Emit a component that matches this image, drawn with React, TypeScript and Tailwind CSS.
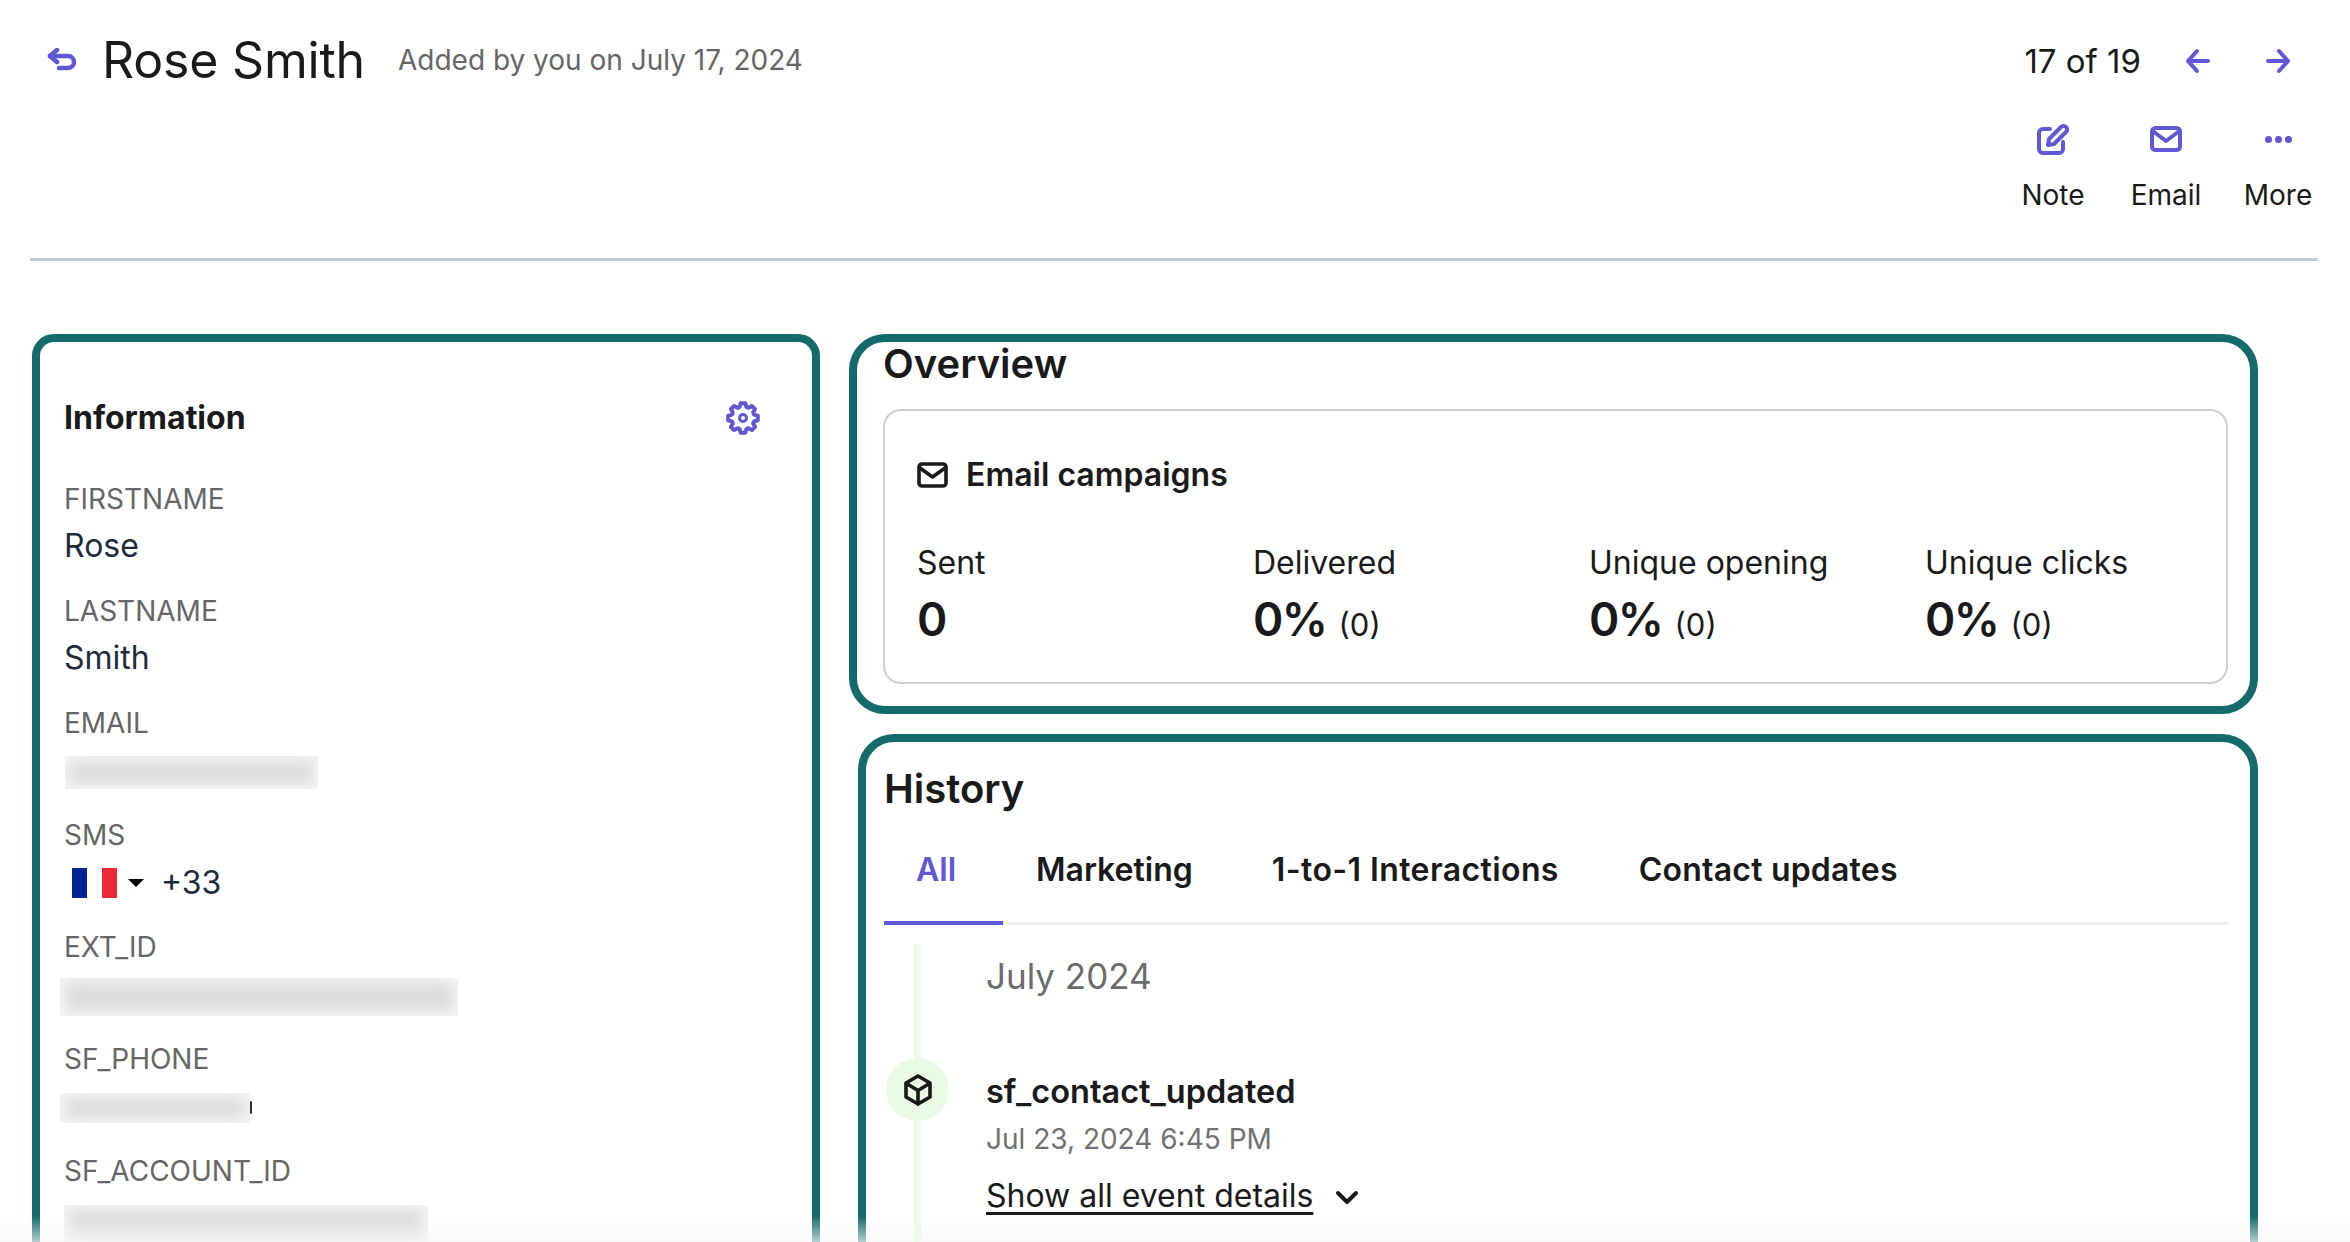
const fieldLabel = "text-[28px] leading-[34px] text-[#666666]";
const fieldValue = "text-[32px] leading-[38px] text-[#1f2a3c]";

// 8 rounded teeth, the stroke's round joins do the softening
function gearPath() {
  const pts: string[] = [];
  for (let i = 0; i < 8; i++) {
    const a = (i * Math.PI) / 4 - Math.PI / 2;
    const p = (r: number, d: number) =>
      `${(17 + r * Math.cos(a + d)).toFixed(2)} ${(17 + r * Math.sin(a + d)).toFixed(2)}`;
    pts.push(p(11.5, -0.3), p(15, -0.15), p(15, 0.15), p(11.5, 0.3));
  }
  return `M${pts.join("L")}Z`;
}

function Blur({ className }: { className: string }) {
  return (
    <div className={`overflow-hidden bg-[#f5f5f6] ${className}`}>
      <div className="m-[5px] h-[calc(100%-10px)] bg-[#dcdcde] blur-[7px]"></div>
    </div>
  );
}

function Metric({ label, value, count }: { label: string; value: string; count?: string }) {
  return (
    <div className="w-[336px] shrink-0">
      <div className="text-[32px] leading-[40px] text-[#1a1a1a]">{label}</div>
      <div className="mt-[7px] flex items-baseline gap-[12px] text-[#1a1a1a]">
        <span className="text-[46px] leading-[58px] font-semibold tracking-[-1.5px]">{value}</span>
        {count && <span className="text-[31px] leading-[36px]">{count}</span>}
      </div>
    </div>
  );
}

export default function App() {
  return (
    <div className="relative h-[1242px] w-[2350px] overflow-hidden bg-white font-['Inter',sans-serif]">
      {/* Header */}
      <div className="ml-[30px] mr-[32px] h-[261px] border-b-[3px] border-[#c3ccd6]">
        <div className="flex items-center pl-[17px] pr-[27px] pt-[30px]">
          <svg width="32" height="26" viewBox="0 0 32 26" fill="none" stroke="#5f57d3" strokeWidth="4.5" strokeLinecap="round" strokeLinejoin="round">
            <path d="M10 2 3 8l7 6" />
            <path d="M3 8h18a6 6 0 0 1 0 12H12" />
          </svg>
          <h1 className="mb-[2px] ml-[23px] text-[50px] leading-[60px] tracking-[-0.2px] text-[#1a1a1a]">Rose Smith</h1>
          <span className="mb-[2px] ml-[33px] text-[28px] leading-[40px] text-[#666666]">Added by you on July 17, 2024</span>
          <span className="ml-auto text-[33px] leading-[40px] text-[#1a1a1a]">17 of 19</span>
          <svg className="ml-[44px]" width="26" height="26" viewBox="0 0 26 26" fill="none" stroke="#5f57d3" strokeWidth="4" strokeLinecap="round" strokeLinejoin="round">
            <path d="M23 13H3M12 3 3 13l9 10" />
          </svg>
          <svg className="ml-[54px]" width="26" height="26" viewBox="0 0 26 26" fill="none" stroke="#5f57d3" strokeWidth="4" strokeLinecap="round" strokeLinejoin="round">
            <path d="M3 13h20M14 3l9 10-9 10" />
          </svg>
        </div>
        <div className="mt-[31px] flex justify-end pr-[7px]">
          <div className="flex w-[62px] flex-col items-center">
            <svg width="32" height="32" viewBox="0 0 32 32" fill="none" stroke="#5f57d3" strokeWidth="4" strokeLinecap="round" strokeLinejoin="round">
              <path d="M13 6H6a4 4 0 0 0-4 4v16a4 4 0 0 0 4 4h16a4 4 0 0 0 4-4v-7" />
              <path d="M24 4a3.5 3.5 0 0 1 5 5L17 21l-6 1 1-6Z" />
            </svg>
            <span className="mt-[23px] text-[28px] leading-[34px] text-[#1a1a1a]">Note</span>
          </div>
          <div className="ml-[48px] flex w-[68px] flex-col items-center">
            <svg className="my-[3px]" width="32" height="26" viewBox="0 0 32 26" fill="none" stroke="#5f57d3" strokeWidth="4" strokeLinecap="round" strokeLinejoin="round">
              <rect x="2" y="2" width="28" height="22" rx="3.5" />
              <path d="m4 6 12 9 12-9" />
            </svg>
            <span className="mt-[23px] text-[28px] leading-[34px] text-[#1a1a1a]">Email</span>
          </div>
          <div className="ml-[45px] flex w-[66px] flex-col items-center">
            <div className="flex h-[32px] items-center gap-[3px]">
              <span className="h-[7px] w-[7px] rounded-full bg-[#5f57d3]"></span>
              <span className="h-[7px] w-[7px] rounded-full bg-[#5f57d3]"></span>
              <span className="h-[7px] w-[7px] rounded-full bg-[#5f57d3]"></span>
            </div>
            <span className="mt-[23px] text-[28px] leading-[34px] text-[#1a1a1a]">More</span>
          </div>
        </div>
      </div>

      <div className="mt-[73px] flex items-start pl-[32px]">
        {/* Information */}
        <div className="h-[1000px] w-[788px] shrink-0 rounded-[22px] border-8 border-[#156b6b] pl-[24px] pr-[52px] pt-[54px]">
          <div className="flex items-center justify-between">
            <h2 className="text-[32px] leading-[44px] font-bold text-[#1a1a1a]">Information</h2>
            <svg width="34" height="34" viewBox="0 0 34 34" fill="none" stroke="#5f57d3" strokeWidth="4" strokeLinecap="round" strokeLinejoin="round">
              <path d={gearPath()} />
              <circle cx="17" cy="17" r="3.5" strokeWidth="3" />
            </svg>
          </div>
          <div className="mt-[42px] flex flex-col">
            <div className="h-[112px]">
              <div className={fieldLabel}>FIRSTNAME</div>
              <div className={`${fieldValue} mt-[11px]`}>Rose</div>
            </div>
            <div className="h-[112px]">
              <div className={fieldLabel}>LASTNAME</div>
              <div className={`${fieldValue} mt-[11px]`}>Smith</div>
            </div>
            <div className="h-[112px]">
              <div className={fieldLabel}>EMAIL</div>
              <Blur className="ml-[1px] mt-[16px] h-[33px] w-[253px]" />
            </div>
            <div className="h-[112px]">
              <div className={fieldLabel}>SMS</div>
              <div className="mt-[12px] flex items-center">
                <div className="ml-[8px] flex h-[30px] w-[45px]">
                  <div className="w-[15px] bg-[#002395]"></div>
                  <div className="w-[15px] bg-white"></div>
                  <div className="w-[15px] bg-[#ed2939]"></div>
                </div>
                <div className="ml-[11px] h-0 w-0 border-x-[8px] border-t-[8px] border-x-transparent border-t-black"></div>
                <span className={`${fieldValue} ml-[17px]`}>+33</span>
              </div>
            </div>
            <div className="h-[112px]">
              <div className={fieldLabel}>EXT_ID</div>
              <Blur className="-ml-[4px] mt-[14px] h-[38px] w-[398px]" />
            </div>
            <div className="h-[112px]">
              <div className={fieldLabel}>SF_PHONE</div>
              <div className="relative -ml-[4px] mt-[17px] w-[190px]">
                <Blur className="h-[30px] w-[190px]" />
                <div className="absolute right-[-2px] top-[8px] h-[13px] w-[2px] rounded-full bg-[#333333]"></div>
              </div>
            </div>
            <div className="h-[112px]">
              <div className={fieldLabel}>SF_ACCOUNT_ID</div>
              <Blur className="mt-[17px] h-[40px] w-[364px]" />
            </div>
          </div>
        </div>

        <div className="ml-[29px] flex w-[1409px] shrink-0 flex-col">
          {/* Overview */}
          <div className="h-[380px] rounded-[36px] border-8 border-[#156b6b] pl-[26px] pr-[22px]">
            <h2 className="text-[40px] leading-[44px] font-semibold text-[#1a1a1a]">Overview</h2>
            <div className="mt-[23px] h-[275px] rounded-[18px] border-2 border-[#cfcfcf] pl-[32px] pt-[44px]">
              <div className="flex items-center gap-[18px]">
                <svg width="31" height="26" viewBox="0 0 31 26" fill="none" stroke="#1a1a1a" strokeWidth="3.6" strokeLinecap="round" strokeLinejoin="round">
                  <rect x="2" y="2" width="27" height="22" rx="3" />
                  <path d="m3 6 12.5 9L28 6" />
                </svg>
                <span className="text-[32px] leading-[40px] font-semibold text-[#1a1a1a]">Email campaigns</span>
              </div>
              <div className="mt-[48px] flex">
                <Metric label="Sent" value="0" />
                <Metric label="Delivered" value="0%" count="(0)" />
                <Metric label="Unique opening" value="0%" count="(0)" />
                <Metric label="Unique clicks" value="0%" count="(0)" />
              </div>
            </div>
          </div>

          {/* History */}
          <div className="ml-[9px] mt-[20px] h-[620px] rounded-[36px] border-8 border-[#156b6b] pl-[18px] pr-[22px] pt-[24px]">
            <h2 className="text-[40px] leading-[46px] font-semibold text-[#1a1a1a]">History</h2>
            <div className="mt-[18px] flex h-[95px] border-b-[3px] border-[#eeeeee] text-[32px] leading-[40px] font-semibold text-[#1a1a1a]">
              <div className="h-[95px] w-[119px] shrink-0 border-b-[4px] border-[#5f57d3] pl-[32px] pt-[20px] text-[#5f57d3]">All</div>
              <div className="ml-[33px] pt-[20px]">Marketing</div>
              <div className="ml-[79px] pt-[20px] tracking-[0.4px]">1-to-1 Interactions</div>
              <div className="ml-[80px] pt-[20px] tracking-[0.2px]">Contact updates</div>
            </div>
            <div className="flex">
              <div className="relative w-[102px] shrink-0">
                <div className="absolute left-[30px] top-[19px] h-[400px] w-[7px] bg-[#e9fbe4]"></div>
              </div>
              <div className="pt-[29px]">
                <div className="text-[35px] leading-[44px] text-[#6b6b6b]">July 2024</div>
              </div>
            </div>
            <div className="mt-[60px] flex">
              <div className="relative z-10 ml-[2px] flex h-[63px] w-[63px] shrink-0 items-center justify-center rounded-full bg-[#e9fbe4]">
                <svg width="30" height="32" viewBox="0 0 30 32" fill="none" stroke="#1a1a1a" strokeWidth="3.6" strokeLinecap="round" strokeLinejoin="round">
                  <path d="M15 2 27 9v14l-12 7-12-7V9Z" />
                  <path d="m3.5 9.5 11.5 7 11.5-7M15 16.5V30" />
                </svg>
              </div>
              <div className="ml-[37px] pt-[14px]">
                <div className="text-[32.5px] leading-[40px] font-semibold text-[#1a1a1a]">sf_contact_updated</div>
                <div className="mt-[8px] text-[28px] leading-[38px] text-[#717171]">Jul 23, 2024 6:45 PM</div>
                <div className="mt-[18px] flex items-center">
                  <span className="text-[32px] leading-[40px] text-[#1a1a1a] underline underline-offset-[5px]">Show all event details</span>
                  <svg className="ml-[22px] mt-[4px]" width="24" height="16" viewBox="0 0 24 16" fill="none" stroke="#1a1a1a" strokeWidth="4" strokeLinecap="round" strokeLinejoin="round">
                    <path d="m3 3 9 9 9-9" />
                  </svg>
                </div>
              </div>
            </div>
          </div>
        </div>
      </div>

      {/* bottom fade */}
      <div className="pointer-events-none absolute inset-x-0 bottom-0 h-[26px] bg-gradient-to-b from-transparent to-[#f7f7f7]/70"></div>
    </div>
  );
}
